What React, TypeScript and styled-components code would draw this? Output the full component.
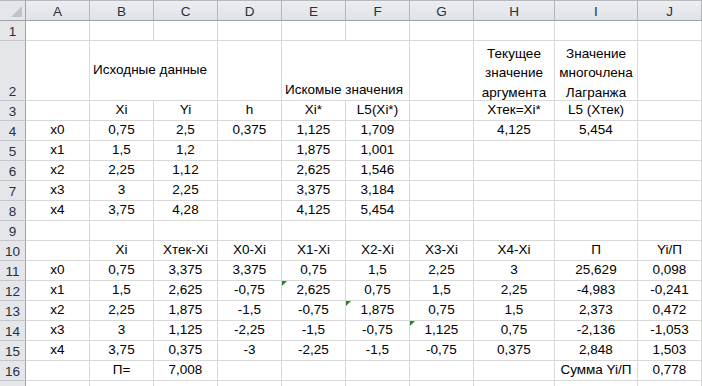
import React from "react";
import styled, { createGlobalStyle } from "styled-components";

const GlobalStyle = createGlobalStyle`
  html, body {
    margin: 0;
    padding: 0;
    background: #ffffff;
    overflow: hidden;
  }
`;

const COLS = ["A", "B", "C", "D", "E", "F", "G", "H", "I", "J"];
const COL_WIDTHS = [64, 64, 64, 64, 64, 64, 64, 81, 83, 64];
const ROW_HEIGHTS = [20, 60, 20, 20, 20, 20, 20, 20, 20, 20, 20, 20, 20, 20, 20, 20, 20];

const Sheet = styled.div`
  display: grid;
  grid-template-columns: 26px ${COL_WIDTHS.map((w) => `${w}px`).join(" ")} 1fr;
  grid-template-rows: 21px ${ROW_HEIGHTS.map((h) => `${h}px`).join(" ")};
  width: 702px;
  height: 386px;
  overflow: hidden;
  font-family: "Liberation Sans", Arial, sans-serif;
  font-size: 13.5px;
  color: #000;
  background: #fff;
`;

const Corner = styled.div`
  position: relative;
  background: #e4e6ea;
  border-right: 1px solid #9ea3aa;
  border-bottom: 1px solid #9ea3aa;
  border-top: 1px solid #b5b9bf;
  box-sizing: border-box;

  &::after {
    content: "";
    position: absolute;
    right: 3px;
    bottom: 3px;
    border-style: solid;
    border-width: 0 0 11px 11px;
    border-color: transparent transparent #c0c4ca transparent;
  }
`;

const ColHead = styled.div<{ $last?: boolean }>`
  background: linear-gradient(#eceef1, #dfe2e7);
  border-right: 1px solid ${(p) => (p.$last ? "transparent" : "#b1b6bd")};
  border-bottom: 1px solid #9ea3aa;
  border-top: 1px solid #b5b9bf;
  box-sizing: border-box;
  display: flex;
  align-items: center;
  justify-content: center;
  color: #27313d;
  padding-top: 1px;
`;

const RowHead = styled.div`
  background: #e4e6ea;
  border-right: 1px solid #9ea3aa;
  border-bottom: 1px solid #c3c7cd;
  box-sizing: border-box;
  display: flex;
  align-items: flex-end;
  justify-content: center;
  padding-bottom: 1px;
  color: #27313d;
`;

const Cell = styled.div<{
  $align?: "left" | "center";
  $valign?: "center" | "bottom";
  $span?: number;
  $flag?: boolean;
}>`
  position: relative;
  grid-column: span ${(p) => p.$span ?? 1};
  border-right: 1px solid #d9d9d9;
  border-bottom: 1px solid #d9d9d9;
  box-sizing: border-box;
  display: flex;
  justify-content: ${(p) => (p.$align === "left" ? "flex-start" : "center")};
  align-items: ${(p) => (p.$valign === "center" ? "center" : "flex-end")};
  text-align: ${(p) => (p.$align === "left" ? "left" : "center")};
  padding: 0 3px 2px;
  white-space: nowrap;
  line-height: 16px;

  ${(p) =>
    p.$flag &&
    `&::before {
      content: "";
      position: absolute;
      left: 0;
      top: 0;
      border-style: solid;
      border-width: 5px 5px 0 0;
      border-color: #1f8a1f transparent transparent transparent;
    }`}
`;

// wrapped header text, three lines that sit low in the tall row
const Wrapped = styled.span`
  white-space: normal;
  line-height: 19.5px;
  margin-bottom: -4px;
`;

type CellSpec =
  | string
  | {
      text: string;
      span?: number;
      align?: "left" | "center";
      valign?: "center" | "bottom";
      wrap?: boolean;
      flag?: boolean;
    };

const rows: CellSpec[][] = [
  ["", "", "", "", "", "", "", "", "", ""],
  [
    "",
    { text: "Исходные данные", span: 2, align: "left", valign: "center" },
    "",
    { text: "Искомые значения", span: 2, align: "left" },
    "",
    { text: "Текущее значение аргумента", wrap: true },
    { text: "Значение многочлена Лагранжа", wrap: true },
    "",
  ],
  ["", "Xi", "Yi", "h", "Xi*", "L5(Xi*)", "", "Xтек=Xi*", "L5 (Xтек)", ""],
  ["x0", "0,75", "2,5", "0,375", "1,125", "1,709", "", "4,125", "5,454", ""],
  ["x1", "1,5", "1,2", "", "1,875", "1,001", "", "", "", ""],
  ["x2", "2,25", "1,12", "", "2,625", "1,546", "", "", "", ""],
  ["x3", "3", "2,25", "", "3,375", "3,184", "", "", "", ""],
  ["x4", "3,75", "4,28", "", "4,125", "5,454", "", "", "", ""],
  ["", "", "", "", "", "", "", "", "", ""],
  ["", "Xi", "Xтек-Xi", "X0-Xi", "X1-Xi", "X2-Xi", "X3-Xi", "X4-Xi", "П", "Yi/П"],
  ["x0", "0,75", "3,375", "3,375", "0,75", "1,5", "2,25", "3", "25,629", "0,098"],
  ["x1", "1,5", "2,625", "-0,75", { text: "2,625", flag: true }, "0,75", "1,5", "2,25", "-4,983", "-0,241"],
  ["x2", "2,25", "1,875", "-1,5", "-0,75", { text: "1,875", flag: true }, "0,75", "1,5", "2,373", "0,472"],
  ["x3", "3", "1,125", "-2,25", "-1,5", "-0,75", { text: "1,125", flag: true }, "0,75", "-2,136", "-1,053"],
  ["x4", "3,75", "0,375", "-3", "-2,25", "-1,5", "-0,75", "0,375", "2,848", "1,503"],
  ["", "П=", "7,008", "", "", "", "", "", "Сумма Yi/П", "0,778"],
  ["", "", "", "", "", "", "", "", "", ""],
];

export default function App() {
  return (
    <>
      <GlobalStyle />
      <Sheet>
        <Corner />
        {COLS.map((c) => (
          <ColHead key={c}>{c}</ColHead>
        ))}
        <ColHead $last />
        {rows.map((row, r) => (
          <React.Fragment key={r}>
            {/* the last row is only a sliver at the window's edge, its number is hidden */}
            <RowHead>{r < rows.length - 1 ? r + 1 : ""}</RowHead>
            {row.map((spec, c) => {
              const s = typeof spec === "string" ? { text: spec } : spec;
              return (
                <Cell
                  key={c}
                  $span={s.span}
                  $align={s.align}
                  $valign={s.valign}
                  $flag={s.flag}
                >
                  {s.wrap ? <Wrapped>{s.text}</Wrapped> : s.text}
                </Cell>
              );
            })}
            <Cell />
          </React.Fragment>
        ))}
      </Sheet>
    </>
  );
}
